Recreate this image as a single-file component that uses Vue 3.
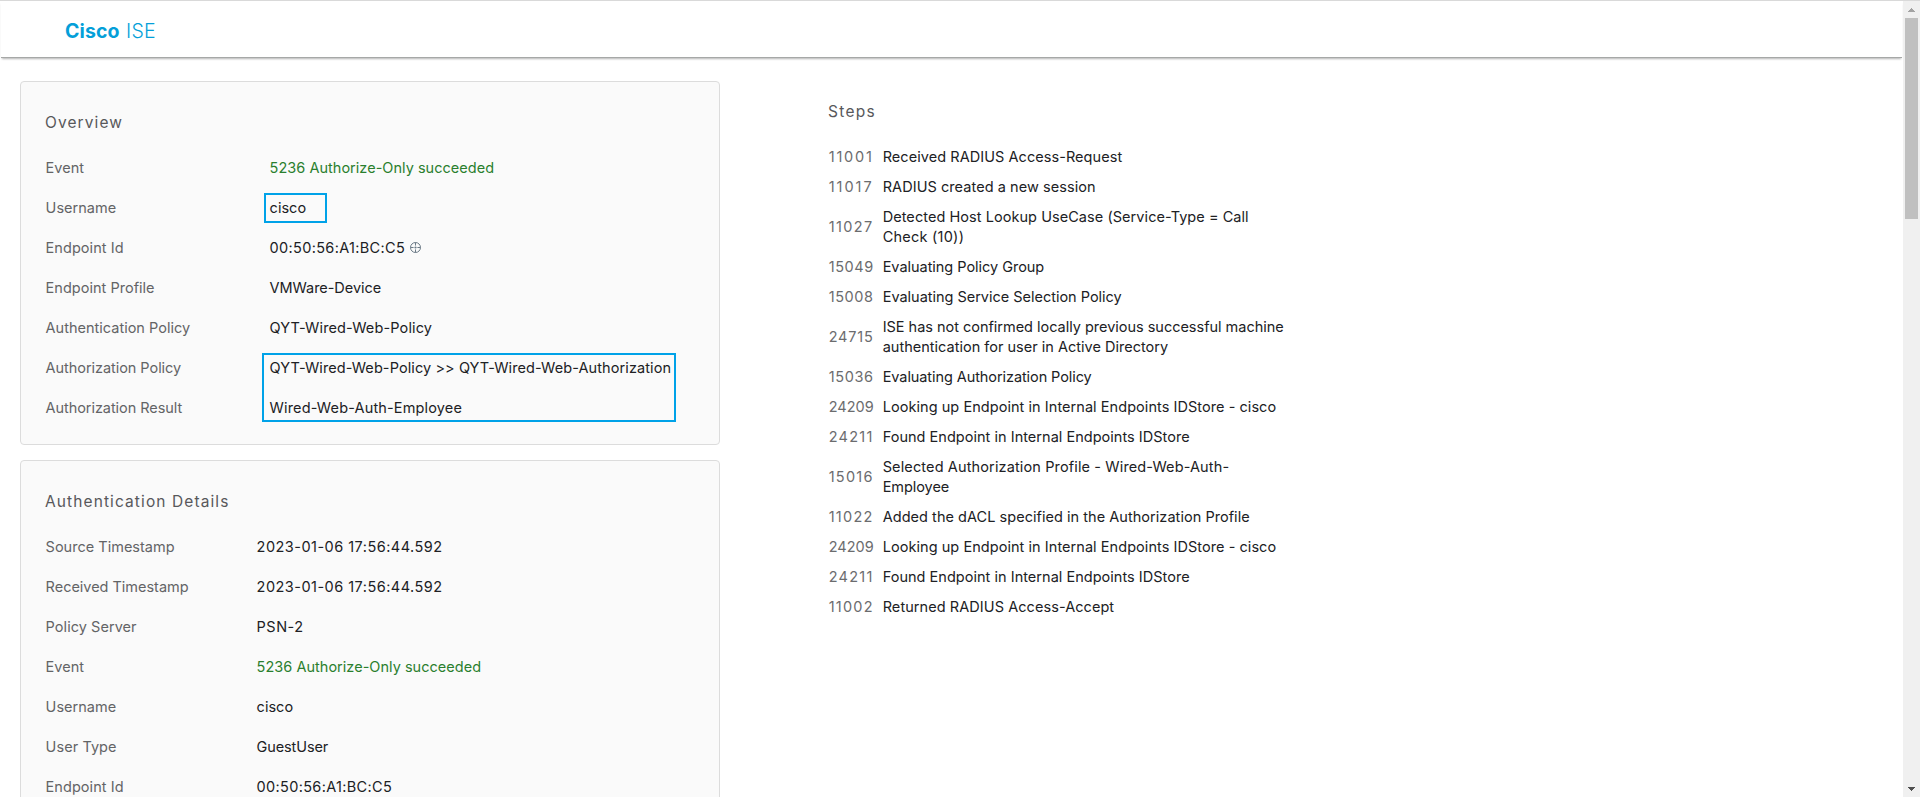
<script setup>
// Tracks a run of text so that it fills the given width in pixels.
const vFit = {
  mounted(el, { value }) {
    const apply = () => {
      el.style.letterSpacing = '0px'
      const natural = el.getBoundingClientRect().width
      el.style.letterSpacing = (value - natural) / el.textContent.length + 'px'
    }
    apply()
    document.fonts.ready.then(apply)
  },
}

const overview = [
  { label: 'Event', lw: 38.5, value: '5236 Authorize-Only succeeded', vw: 224.5, ok: true },
  { label: 'Username', lw: 70.5, value: 'cisco', vw: 36.5 },
  { label: 'Endpoint Id', lw: 78, value: '00:50:56:A1:BC:C5', vw: 135.5, target: true },
  { label: 'Endpoint Profile', lw: 109, value: 'VMWare-Device', vw: 111.5 },
  { label: 'Authentication Policy', lw: 144.5, value: 'QYT-Wired-Web-Policy', vw: 162.5 },
  { label: 'Authorization Policy', lw: 135.5, value: 'QYT-Wired-Web-Policy >> QYT-Wired-Web-Authorization', vw: 401.5 },
  { label: 'Authorization Result', lw: 136.5, value: 'Wired-Web-Auth-Employee', vw: 192.5 },
]

const details = [
  { label: 'Source Timestamp', lw: 129, value: '2023-01-06 17:56:44.592', vw: 186 },
  { label: 'Received Timestamp', lw: 143, value: '2023-01-06 17:56:44.592', vw: 186 },
  { label: 'Policy Server', lw: 91, value: 'PSN-2', vw: 47 },
  { label: 'Event', lw: 38.5, value: '5236 Authorize-Only succeeded', vw: 224.5, ok: true },
  { label: 'Username', lw: 70.5, value: 'cisco', vw: 36.5 },
  { label: 'User Type', lw: 71, value: 'GuestUser', vw: 71.5 },
  { label: 'Endpoint Id', lw: 78, value: '00:50:56:A1:BC:C5', vw: 135.5 },
]

const steps = [
  { code: '11001', lines: [['Received RADIUS Access-Request', 239.5]] },
  { code: '11017', lines: [['RADIUS created a new session', 213]] },
  { code: '11027', lines: [['Detected Host Lookup UseCase (Service-Type = Call', 366], ['Check (10))', 81.5]] },
  { code: '15049', lines: [['Evaluating Policy Group', 161.5]] },
  { code: '15008', lines: [['Evaluating Service Selection Policy', 239]] },
  { code: '24715', lines: [['ISE has not confirmed locally previous successful machine', 401], ['authentication for user in Active Directory', 285.5]] },
  { code: '15036', lines: [['Evaluating Authorization Policy', 209]] },
  { code: '24209', lines: [['Looking up Endpoint in Internal Endpoints IDStore - cisco', 393.5]] },
  { code: '24211', lines: [['Found Endpoint in Internal Endpoints IDStore', 307]] },
  { code: '15016', lines: [['Selected Authorization Profile - Wired-Web-Auth-', 346.5], ['Employee', 66.5]] },
  { code: '11022', lines: [['Added the dACL specified in the Authorization Profile', 367]] },
  { code: '24209', lines: [['Looking up Endpoint in Internal Endpoints IDStore - cisco', 393.5]] },
  { code: '24211', lines: [['Found Endpoint in Internal Endpoints IDStore', 307]] },
  { code: '11002', lines: [['Returned RADIUS Access-Accept', 231.5]] },
]
</script>

<template>
  <div class="window">
    <div class="page">
      <header class="topbar">
        <span v-fit="54.5" class="brand">Cisco</span>
        <span v-fit="30" class="product">ISE</span>
      </header>
      <main class="content">
        <div class="left">
          <section class="card">
            <h2><span v-fit="78">Overview</span></h2>
            <div v-for="r in overview" :key="r.label" class="row">
              <div class="label"><span v-fit="r.lw">{{ r.label }}</span></div>
              <div class="value" :class="{ ok: r.ok }">
                <span v-fit="r.vw">{{ r.value }}</span>
                <svg v-if="r.target" class="target" width="13" height="13" viewBox="0 0 13 13">
                  <circle cx="6.5" cy="6.5" r="5" />
                  <path d="M6.5 1.5V4.6M6.5 8.4V11.5M1.5 6.5H4.6M8.4 6.5H11.5" />
                  <circle class="dot" cx="6.5" cy="6.5" r="1.1" />
                </svg>
              </div>
            </div>
            <div class="mark mark-user"></div>
            <div class="mark mark-policy"></div>
          </section>
          <section class="card second">
            <h2><span v-fit="184.5">Authentication Details</span></h2>
            <div v-for="r in details" :key="r.label" class="row">
              <div class="label"><span v-fit="r.lw">{{ r.label }}</span></div>
              <div class="value" :class="{ ok: r.ok }"><span v-fit="r.vw">{{ r.value }}</span></div>
            </div>
          </section>
        </div>
        <section class="steps">
          <h2><span v-fit="48">Steps</span></h2>
          <div v-for="(s, i) in steps" :key="i" class="step">
            <div class="code"><span v-fit="45">{{ s.code }}</span></div>
            <div class="desc">
              <div v-for="l in s.lines" :key="l[0]"><span v-fit="l[1]">{{ l[0] }}</span></div>
            </div>
          </div>
        </section>
      </main>
    </div>
    <aside class="scrollbar">
      <svg class="arrow" width="17" height="17" viewBox="0 0 17 17" shape-rendering="crispEdges">
        <path fill="#a3a3a3" d="M8 7h1v1h1v1h1v1h1v1H5v-1h1V9h1V8h1z" />
      </svg>
      <div class="thumb"></div>
      <svg class="arrow last" width="17" height="17" viewBox="0 0 17 17" shape-rendering="crispEdges">
        <path fill="#505050" d="M5 7h7v1h-1v1h-1v1H9v1H8v-1H7V9H6V8H5z" />
      </svg>
    </aside>
  </div>
</template>

<style>
html, body { margin: 0; overflow: hidden; background: #fff; }
</style>

<style scoped>
.window {
  box-sizing: border-box;
  display: flex;
  width: 100vw;
  height: 100vh;
  overflow: hidden;
  border-top: 1px solid #d9d9d9;
  font-family: Inter, "Liberation Sans", sans-serif;
  font-size: 14.5px;
  line-height: 20px;
  color: #202124;
}
.window span { display: inline-block; white-space: nowrap; }
.page { flex: 1; min-width: 0; overflow: hidden; }
.topbar {
  box-sizing: border-box;
  display: flex;
  align-items: center;
  gap: 6.5px;
  height: 57px;
  margin: 0 1px;
  padding: 3px 0 0 64px;
  border-bottom: 1px solid #a6a8a7;
  box-shadow: 0 2px 2px -1px rgba(0, 0, 0, 0.3);
  font-size: 19.5px;
  color: #049fd9;
}
.brand { font-weight: 700; }
.product { font-weight: 300; }
.content { display: flex; gap: 108px; padding: 23px 0 0 20px; }
.left { width: 700px; flex: none; }
.card {
  position: relative;
  box-sizing: border-box;
  height: 364px;
  padding: 19px 24px;
  border: 1px solid #dcdcdc;
  border-radius: 4px;
  background: #fafafa;
}
.card + .card { margin-top: 15px; }
.second { height: 420px; }
h2 {
  margin: 0;
  font-size: 15.5px;
  font-weight: 400;
  line-height: 44px;
  color: #58585b;
}
.row { display: flex; height: 40px; align-items: center; padding-left: 0.6px; }
.row:nth-child(2) { margin-top: 3px; }
.label { width: 224px; color: #636466; }
.second .label { width: 211px; }
.value { display: flex; align-items: center; color: #202124; }
.ok { color: #2a7f2e; }
.target { margin: -2px 0 0 4px; fill: none; stroke: #6c7b87; stroke-width: 1; }
.target .dot { fill: #6c7b87; stroke: none; }
.mark { position: absolute; box-sizing: border-box; border: 2px solid #00a2e8; }
.mark-user { left: 243px; top: 111px; width: 63px; height: 30px; }
.mark-policy { left: 241px; top: 271px; width: 414px; height: 69px; }
.steps { padding-top: 9px; }
.steps h2 { margin-bottom: 8px; }
.step { display: flex; align-items: center; padding: 5px 0 5px 0.7px; }
.code { width: 54px; color: #6b6c6e; }
.scrollbar { display: flex; flex-direction: column; align-items: center; width: 17px; background: #f0f0f0; }
.arrow { display: block; flex: none; }
.thumb { width: 13px; height: 201px; background: #c0c0c0; }
.last { margin-top: auto; }
</style>
